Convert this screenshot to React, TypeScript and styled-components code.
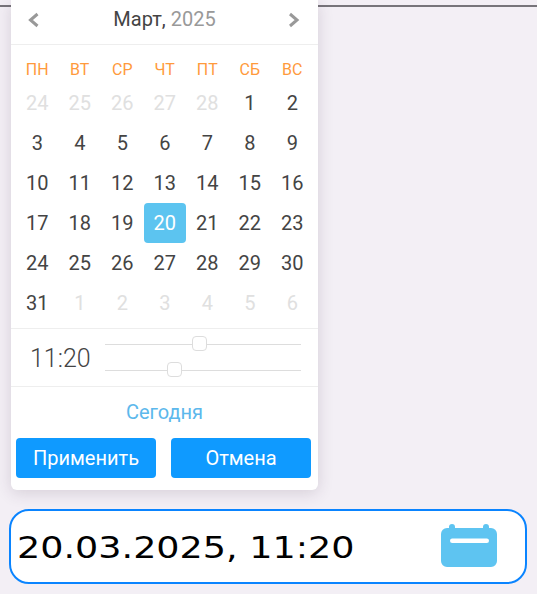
import React from "react";
import styled, { createGlobalStyle } from "styled-components";

const GlobalStyle = createGlobalStyle`
  html, body {
    margin: 0;
    padding: 0;
    background: #f3eff5;
    overflow: hidden;
  }
`;

const Page = styled.div`
  position: relative;
  display: flex;
  flex-direction: column;
  width: 537px;
  height: 594px;
  font-family: Roboto, sans-serif;
`;

const TopRule = styled.div`
  position: absolute;
  top: 5px;
  left: 0;
  right: 0;
  height: 2px;
  background: #77747a;
`;

const Popover = styled.div`
  position: relative;
  display: flex;
  flex-direction: column;
  box-sizing: border-box;
  width: 307px;
  height: 490px;
  margin-left: 11px;
  background: #fff;
  border-radius: 0 0 6px 6px;
  box-shadow: 0 3px 16px rgba(60, 40, 70, 0.16);
`;

const Header = styled.div`
  display: flex;
  align-items: center;
  justify-content: space-between;
  box-sizing: border-box;
  height: 45px;
  padding: 0 16px;
  border-bottom: 1px solid #eee;
  font-size: 20px;
  color: #444;
`;

const Title = styled.div`
  padding-bottom: 6px;
`;

const Year = styled.span`
  color: #999;
`;

const NavIcon = styled.svg`
  display: block;
  width: 14px;
  height: 16px;
  margin-bottom: 4px;
  fill: none;
  stroke: #999;
  stroke-width: 3;
`;

const Weekdays = styled.div`
  display: grid;
  grid-template-columns: repeat(7, 42.5px);
  padding: 15px 5px 0;
`;

const Weekday = styled.div`
  height: 19px;
  line-height: 19px;
  text-align: center;
  font-size: 16px;
  color: #ff9a3c;
`;

const Days = styled.div`
  display: grid;
  grid-template-columns: repeat(7, 42.5px);
  grid-auto-rows: 40px;
  padding: 4px 5px 0;
  height: 245px;
`;

const Day = styled.div<{ $muted?: boolean; $selected?: boolean }>`
  display: flex;
  align-items: center;
  justify-content: center;
  border-radius: 4px;
  font-size: 20px;
  color: ${(p) => (p.$selected ? "#fff" : p.$muted ? "#e0e0e0" : "#444")};
  background: ${(p) => (p.$selected ? "#5cc4f0" : "transparent")};
`;

const TimeRow = styled.div`
  display: flex;
  align-items: center;
  box-sizing: border-box;
  height: 59px;
  padding: 0 17px 0 19px;
  border-top: 1px solid #eee;
  border-bottom: 1px solid #eee;
`;

const TimeText = styled.div`
  width: 75px;
  padding-top: 2px;
  white-space: nowrap;
  font-weight: 300;
  font-size: 25px;
  color: #444;
`;

const Sliders = styled.div`
  display: flex;
  flex-direction: column;
  gap: 25px;
  flex: 1;
`;

const Track = styled.div`
  position: relative;
  height: 1px;
  background: #ddd;
`;

const Thumb = styled.div`
  position: absolute;
  top: -8px;
  box-sizing: border-box;
  width: 15px;
  height: 15px;
  background: #fff;
  border: 1px solid #ddd;
  border-radius: 4px;
`;

const TodayLink = styled.div`
  height: 51px;
  line-height: 51px;
  text-align: center;
  font-size: 20px;
  color: #5cb8ec;
`;

const Actions = styled.div`
  display: flex;
  justify-content: space-between;
  padding: 0 7px 0 5px;
`;

const ActionButton = styled.button`
  width: 140px;
  height: 40px;
  padding: 0;
  border: 0;
  border-radius: 4px;
  background: #0f9aff;
  color: #fff;
  font-family: Roboto, sans-serif;
  font-size: 20px;
`;

const Field = styled.div`
  display: flex;
  align-items: center;
  justify-content: space-between;
  box-sizing: border-box;
  width: 518px;
  height: 75px;
  margin: 19px 0 0 9px;
  padding: 0 28px 0 6px;
  background: #fff;
  border: 2px solid #0a84ff;
  border-radius: 20px;
`;

const FieldValue = styled.div`
  padding-top: 2px;
  font-family: "DejaVu Sans", sans-serif;
  font-size: 30px;
  color: #000;
  transform: scaleX(1.217);
  transform-origin: left center;
`;

const CalendarIcon = styled.svg`
  display: block;
  width: 56px;
  height: 44px;
  margin-bottom: 3px;
`;

const weekdays = ["ПН", "ВТ", "СР", "ЧТ", "ПТ", "СБ", "ВС"];

const days = [
  ...[24, 25, 26, 27, 28].map((d) => ({ d, muted: true })),
  ...Array.from({ length: 31 }, (_, i) => ({ d: i + 1, muted: false })),
  ...[1, 2, 3, 4, 5, 6].map((d) => ({ d, muted: true })),
];

const thumbLeft = (value: number, max: number) => (value / max) * 182;

export default function App() {
  return (
    <Page>
      <GlobalStyle />
      <TopRule />
      <Popover>
        <Header>
          <NavIcon viewBox="0 0 14 16">
            <path d="M10.5 2 L3.5 8 L10.5 14" />
          </NavIcon>
          <Title>
            Март, <Year>2025</Year>
          </Title>
          <NavIcon viewBox="0 0 14 16">
            <path d="M2 2 L9 8 L2 14" />
          </NavIcon>
        </Header>
        <Weekdays>
          {weekdays.map((w) => (
            <Weekday key={w}>{w}</Weekday>
          ))}
        </Weekdays>
        <Days>
          {days.map((item, i) => (
            <Day key={i} $muted={item.muted} $selected={!item.muted && item.d === 20}>
              {item.d}
            </Day>
          ))}
        </Days>
        <TimeRow>
          <TimeText>11:20</TimeText>
          <Sliders>
            <Track>
              <Thumb style={{ left: thumbLeft(11, 23) }} />
            </Track>
            <Track>
              <Thumb style={{ left: thumbLeft(20, 59) }} />
            </Track>
          </Sliders>
        </TimeRow>
        <TodayLink>Сегодня</TodayLink>
        <Actions>
          <ActionButton>Применить</ActionButton>
          <ActionButton>Отмена</ActionButton>
        </Actions>
      </Popover>
      <Field>
        <FieldValue>20.03.2025, 11:20</FieldValue>
        <CalendarIcon viewBox="0 0 56 44">
          <path
            fill="#5ec4f1"
            d="M8 5 V4 a3 3 0 0 1 6 0 V5 H42 V4 a3 3 0 0 1 6 0 V5 H50 a6 6 0 0 1 6 6 V38 a6 6 0 0 1 -6 6 H6 a6 6 0 0 1 -6 -6 V11 a6 6 0 0 1 6 -6 H8 Z"
          />
          <rect x="9" y="15.5" width="39" height="4.5" rx="2.2" fill="#fff" />
        </CalendarIcon>
      </Field>
    </Page>
  );
}
